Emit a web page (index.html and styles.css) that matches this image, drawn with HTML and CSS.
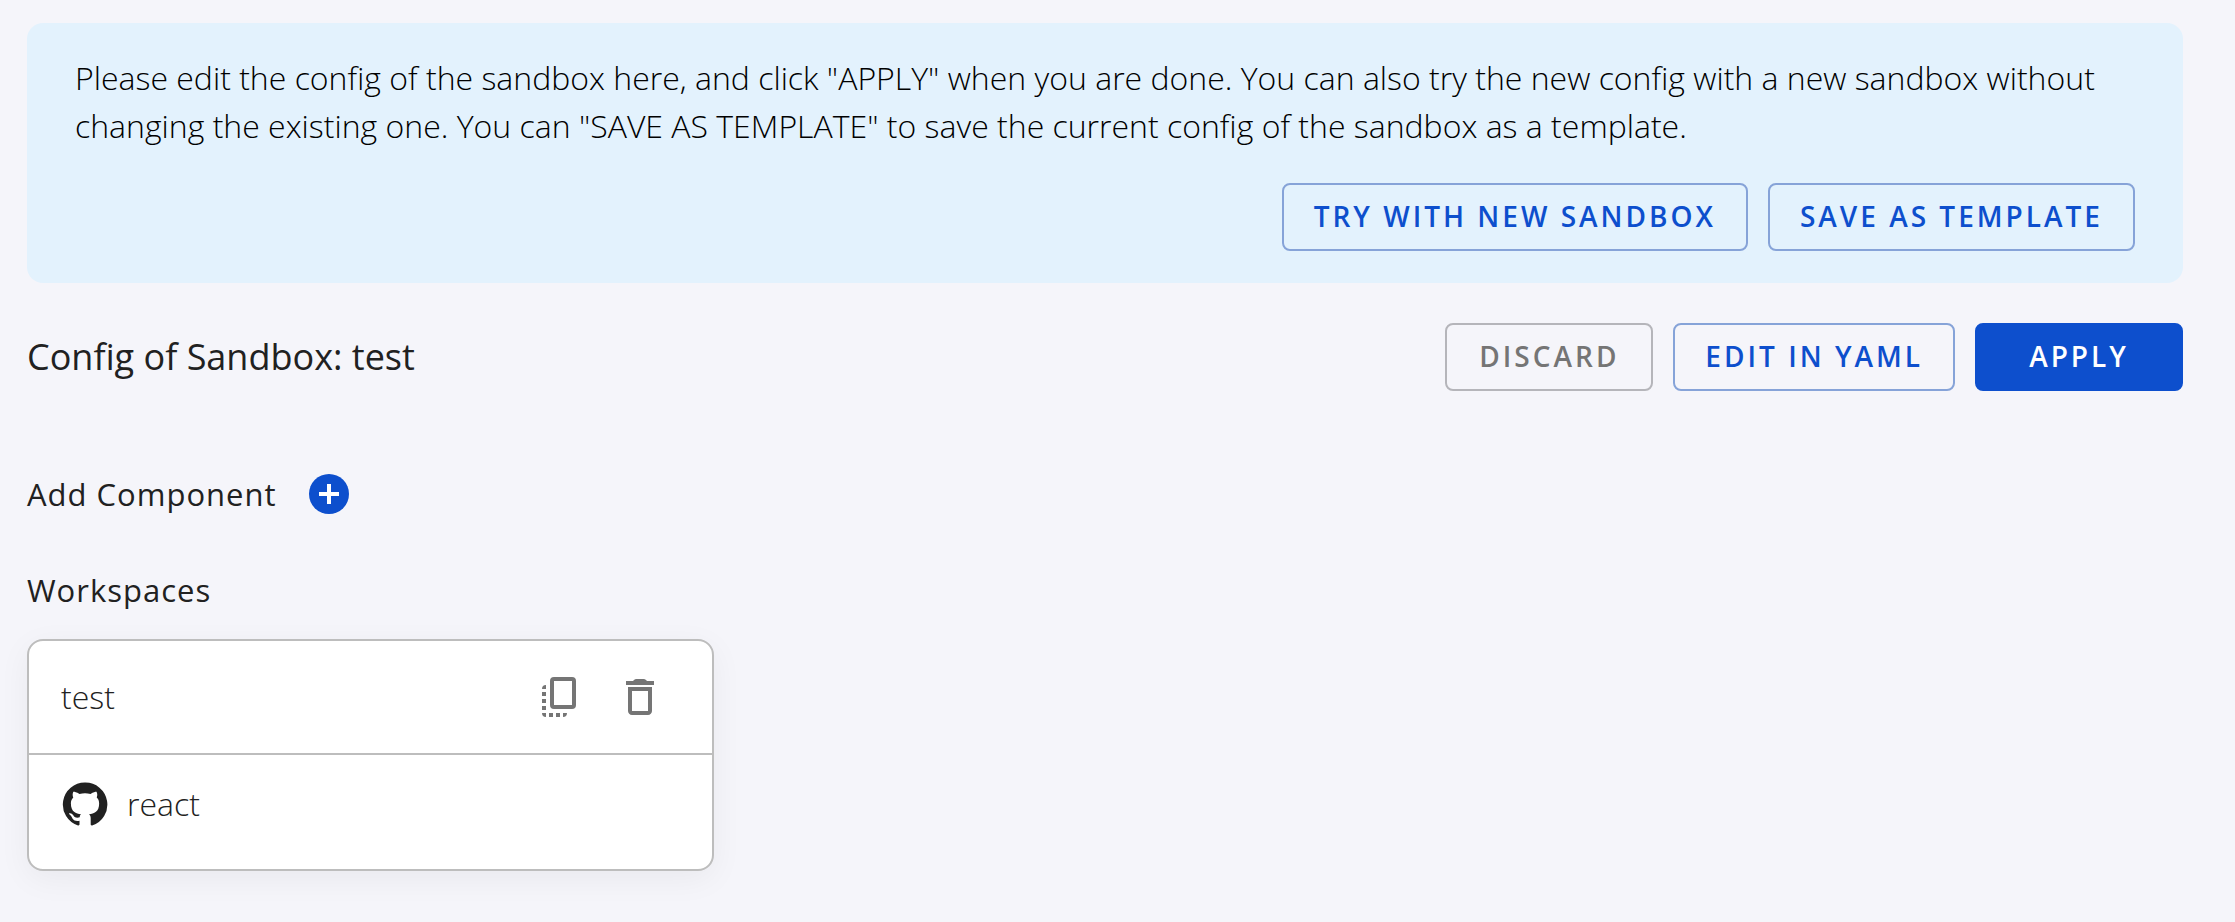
FILE: index.html
```html
<!DOCTYPE html>
<html lang="en">
<head>
    <meta charset="UTF-8">
    <meta name="viewport" content="width=device-width, initial-scale=1.0">
    <title>Sandbox Config</title>
    <link rel="stylesheet" href="styles.css">
</head>
<body>
    <main class="page">
        <section class="banner">
            <p class="banner-text">Please edit the config of the sandbox here, and click "APPLY" when you are done. You can also try the new config with a new sandbox without changing the existing one. You can "SAVE AS TEMPLATE" to save the current config of the sandbox as a template.</p>
            <div class="actions">
                <button type="button" class="btn">TRY WITH NEW SANDBOX</button>
                <button type="button" class="btn">SAVE AS TEMPLATE</button>
            </div>
        </section>

        <header class="title-bar">
            <h1 class="title">Config of Sandbox: test</h1>
            <div class="actions">
                <button type="button" class="btn btn-grey">DISCARD</button>
                <button type="button" class="btn">EDIT IN YAML</button>
                <button type="button" class="btn btn-primary">APPLY</button>
            </div>
        </header>

        <div class="add-row">
            <h2 class="subtitle">Add Component</h2>
            <button type="button" class="add-btn" aria-label="Add component">
                <svg viewBox="0 0 40 40" width="40" height="40">
                    <circle cx="20" cy="20" r="20" fill="#0d4fcd"/>
                    <path d="M10 18h8v-8h4v8h8v4h-8v8h-4v-8h-8z" fill="#fff"/>
                </svg>
            </button>
        </div>

        <h2 class="subtitle">Workspaces</h2>
        <article class="card">
            <div class="card-head">
                <span class="card-name">test</span>
                <button type="button" class="icon-btn" aria-label="Duplicate">
                    <svg viewBox="0 0 48 48" width="48" height="48" fill="#757575">
                        <path fill-rule="evenodd" d="M18 4h18a4 4 0 0 1 4 4v24a4 4 0 0 1-4 4H18a4 4 0 0 1-4-4V8a4 4 0 0 1 4-4zm0 4v24h18V8z"/>
                        <path d="M6 16q0-4 4-4v4zM6 19h4v4H6zM6 26h4v4H6zM6 33h4v4H6zM6 40h4v4q-4 0-4-4zM13 40h4v4h-4zM20 40h4v4h-4zM27 40h4q0 4-4 4z"/>
                    </svg>
                </button>
                <button type="button" class="icon-btn" aria-label="Delete">
                    <svg viewBox="0 0 24 24" width="48" height="48" fill="#757575">
                        <path d="M6 19c0 1.1.9 2 2 2h8c1.1 0 2-.9 2-2V7H6v12zM8 9h8v10H8V9z"/>
                        <path d="M5 4h3.500l.5-.5q.5-.5 1.200-.5h3.600q.7 0 1.200.5l.5.5H19v2H5z"/>
                    </svg>
                </button>
            </div>
            <div class="card-body">
                <svg viewBox="0 0 24 24" width="48" height="48" fill="#212121" aria-hidden="true">
                    <path d="M12 1.270a11 11 0 00-3.480 21.460c.55.09.73-.28.73-.55v-1.840c-3.030.64-3.670-1.460-3.670-1.460-.55-1.290-1.280-1.650-1.280-1.650-.92-.65.1-.65.1-.65 1.100 0 1.730 1.100 1.730 1.100.92 1.650 2.570 1.200 3.210.92a2 2 0 01.64-1.470c-2.470-.27-5.040-1.190-5.040-5.500 0-1.100.46-2.100 1.200-2.840a3.760 3.760 0 010-2.930s.91-.28 3.110 1.100c1.800-.49 3.700-.49 5.500 0 2.100-1.380 3.020-1.100 3.020-1.100a3.760 3.760 0 01.1 2.930c.83.74 1.200 1.740 1.200 2.940 0 4.210-2.570 5.130-5.040 5.400.45.37.82.92.82 2.020v3.030c0 .27.1.64.73.55A11 11 0 0012 1.270"/>
                </svg>
                <span class="card-name">react</span>
            </div>
        </article>
    </main>
</body>
</html>
```

FILE: styles.css
```css
body, h1, h2, p {
    margin: 0;
    padding: 0;
}

body {
    background-color: #f5f5fa;
    color: #212121;
    font-family: "Open Sans", "Noto Sans", sans-serif;
    font-size: 32px;
    font-weight: 300;
    line-height: 48px;
}

.page {
    padding: 23px 52px 48px 27px;
}

.banner {
    padding: 31px 48px 32px;
    border-radius: 16px;
    background-color: #e3f2fd;
    color: #000;
}

.banner-text {
    margin-bottom: 33px;
}

.actions {
    display: flex;
    justify-content: flex-end;
    gap: 20px;
}

.btn {
    box-sizing: border-box;
    height: 68px;
    min-width: 208px;
    padding: 0 30px 2px;
    border: 2px solid #86a3d8;
    border-radius: 8px;
    background-color: transparent;
    color: #0d4fcd;
    font-family: inherit;
    font-size: 28px;
    font-weight: 600;
    letter-spacing: 3px;
    cursor: pointer;
}

.btn-grey {
    border-color: #b5b5ba;
    color: #757575;
}

.btn-primary {
    border-color: #0d4fcd;
    background-color: #0d4fcd;
    color: #fff;
}

.title-bar {
    display: flex;
    align-items: center;
    justify-content: space-between;
    margin-top: 40px;
}

.title {
    font-size: 36px;
    font-weight: 500;
}

.add-row {
    display: flex;
    align-items: center;
    gap: 32px;
    margin: 79px 0 48px;
}

.subtitle {
    font-size: 31px;
    font-weight: 500;
    letter-spacing: 1px;
}

.add-btn, .icon-btn {
    display: flex;
    padding: 0;
    border: 0;
    background: none;
    cursor: pointer;
}

/* workspace card */
.card {
    box-sizing: border-box;
    width: 687px;
    max-width: 100%;
    margin-top: 25px;
    border: 2px solid #bdbdbd;
    border-radius: 16px;
    background-color: #fff;
    box-shadow: 0 8px 32px rgba(0, 0, 0, 0.05);
}

.card-head {
    display: flex;
    align-items: center;
    gap: 32px;
    padding: 32px 48px 32px 32px;
    border-bottom: 2px solid #bdbdbd;
}

.card-head .card-name {
    flex: 1;
}

.card-body {
    display: flex;
    align-items: center;
    gap: 18px;
    padding: 25px 32px 41px;
}
```
